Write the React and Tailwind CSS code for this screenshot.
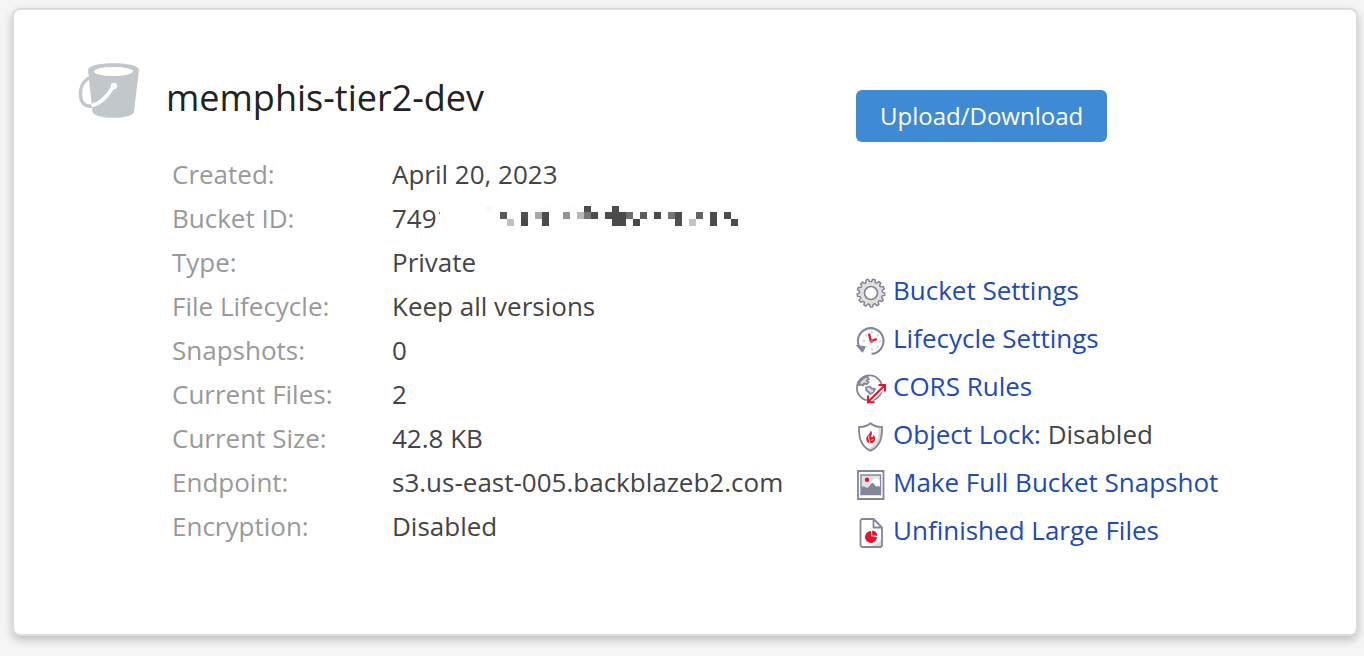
import React from "react";

const CELL = 7;

// [column, row, shade] of every mosaic cell covering the bucket ID
const MOSAIC = [
  [0, 0, "#f8f8f8"], [8, 0, "#fcfcfc"], [12, 0, "#fdfdfd"], [14, 0, "#4c4c4c"], [18, 0, "#4c4c4c"],
  [2, 1, "#5a5a5a"], [5, 1, "#505050"], [7, 1, "#a8a8a8"], [8, 1, "#4c4c4c"], [11, 1, "#949494"],
  [13, 1, "#b8b8b8"], [14, 1, "#757575"], [15, 1, "#4c4c4c"], [16, 1, "#f6f6f6"], [17, 1, "#4c4c4c"],
  [18, 1, "#4a4a4a"], [19, 1, "#4a4a4a"], [20, 1, "#6e6e6e"], [22, 1, "#5a5a5a"], [24, 1, "#4c4c4c"],
  [26, 1, "#757575"], [27, 1, "#4c4c4c"], [30, 1, "#646464"], [32, 1, "#4c4c4c"], [34, 1, "#4c4c4c"],
  [35, 1, "#fcfcfc"],
  [3, 2, "#c0c0c0"], [5, 2, "#4a4a4a"], [8, 2, "#4a4a4a"], [18, 2, "#4a4a4a"], [19, 2, "#4a4a4a"],
  [21, 2, "#4a4a4a"], [27, 2, "#505050"], [29, 2, "#c4c4c4"], [32, 2, "#4a4a4a"], [35, 2, "#4a4a4a"],
];

function BucketIcon() {
  return (
    <svg className="h-[56px] w-[62px] shrink-0" viewBox="-1 -1 62 56" fill="none" aria-hidden="true">
      <path
        d="M9 7C9 3 20 0.3 34.500 0.300S60 3 60 7L55 48.500C54.500 52.500 46 54.800 34.500 54.800S14.500 52.500 13.500 48.500Z"
        fill="#c2c7cb"
      />
      <ellipse cx="34.500" cy="8.500" rx="19.500" ry="4.500" fill="#fff" />
      <path d="M10 15C4 18 1 25 1.500 32.500C2 40 6 44 13 43" stroke="#c2c7cb" strokeWidth="3.500" />
      <path d="M12.500 42.500C21 41 28 34 34 24" stroke="#fff" strokeWidth="3.600" />
      <circle cx="35" cy="23" r="3.200" fill="#fff" />
    </svg>
  );
}

const iconProps = {
  className: "h-[30px] w-[30px] shrink-0",
  viewBox: "0 0 30 30",
  fill: "none",
  "aria-hidden": true,
};

const GEAR_PATH = (() => {
  const teeth = 13;
  const step = (Math.PI * 2) / teeth;
  const at = (angle, r) => `${(15 + r * Math.cos(angle)).toFixed(2)} ${(15 + r * Math.sin(angle)).toFixed(2)}`;
  let d = "";
  for (let i = 0; i < teeth; i++) {
    const a = (i + 0.5) * step - Math.PI / 2;
    d += `${i ? "L" : "M"}${at(a - step * 0.24, 13.9)}L${at(a + step * 0.12, 13.9)}L${at(a + step * 0.24, 11.7)}Q${at(a + step * 0.42, 10.9)} ${at(a + step * 0.6, 11.7)}`;
  }
  return d + "Z";
})();

function GearIcon() {
  return (
    <svg {...iconProps}>
      <path d={GEAR_PATH} fill="#e3e0db" stroke="#83859b" strokeWidth="1.500" strokeLinejoin="round" />
      <circle cx="15" cy="15" r="6.500" fill="#fff" stroke="#83859b" strokeWidth="1.700" />
    </svg>
  );
}

function HistoryIcon() {
  return (
    <svg {...iconProps}>
      <path d="M4.300 22.500A12.800 12.800 0 1 1 15.500 27.800" stroke="#83859b" strokeWidth="2.100" />
      <path d="M0.500 19.500L9.300 20.800L6.500 26.300Z" fill="#83859b" stroke="#83859b" strokeLinejoin="round" />
      <path
        d="M16 5V7.500M16 22V24.500M6.500 15H9M23 15H25.500M9.300 8.300L11 10M22.700 8.300L21 10M22.700 21.700L21 20M9.300 21.700L11 20"
        stroke="#d5d2cd"
        strokeWidth="1.500"
      />
      <path d="M13 7.500L14.800 15.200L20.800 13" stroke="#e81328" strokeWidth="2.300" />
      <circle cx="15.800" cy="15.300" r="1.600" fill="#83859b" />
    </svg>
  );
}

function GlobeIcon() {
  return (
    <svg {...iconProps}>
      <circle cx="13.500" cy="14" r="12.600" stroke="#83859b" strokeWidth="1.800" />
      <path
        d="M3.500 8.500C5.500 5 8 3.200 11 2.500L13 5L10.500 6.500L12.800 8L11 10L8 9.500L7 11.500L5 10.500L2.500 11ZM10 13.500L14 12.500L15.500 14.500L19 15L17.500 18.500L14 20L12.500 18L10.500 16.500Z"
        fill="#dfdcd7"
        stroke="#83859b"
        strokeWidth="1.800"
        strokeLinejoin="round"
      />
      <path d="M12 28L29 11" stroke="#fff" strokeWidth="5" />
      <path d="M12 28L29 11M22.500 11H29V17.500M12 21.500V28.200H18.500" stroke="#e81328" strokeWidth="2" />
    </svg>
  );
}

function ShieldIcon() {
  return (
    <svg {...iconProps}>
      <path
        d="M14.500 1.200C11 4 7 5.200 3 4.800C2.800 14.500 4 24 14.500 28.800C25 24 26.200 14.500 26 4.800C22 5.200 18 4 14.500 1.200Z"
        fill="#fff"
      />
      <path d="M22.500 6C23.500 14 21.500 22.500 12 26.800L14.500 28.500C24.500 24 26 15 26 5Z" fill="#dedbd6" />
      <path
        d="M14.500 1.200C11 4 7 5.200 3 4.800C2.800 14.500 4 24 14.500 28.800C25 24 26.200 14.500 26 4.800C22 5.200 18 4 14.500 1.200Z"
        stroke="#83859b"
        strokeWidth="1.800"
        strokeLinejoin="round"
      />
      <path
        d="M14.500 8.500C16.500 10 16 12 15.300 13.500C14.800 15 15.800 16 16.800 15C17.500 14.200 17.400 13.200 17.300 12.500C19.300 14.500 20 18 17.800 20.200C16 21.800 12.800 21.800 11.200 19.800C9.500 17.500 10.300 15 12 13.200C13.500 11.500 14.800 10.500 14.500 8.500Z"
        fill="#e81328"
      />
      <path d="M13 13.500C11.800 17 14 18 13.800 21.500M15 18.500L17.500 17.500" stroke="#fff" strokeWidth="0.900" />
    </svg>
  );
}

function PictureIcon() {
  return (
    <svg {...iconProps}>
      <path d="M2 1H27.500V29H2Z" fill="#fff" stroke="#83859b" strokeWidth="1.800" />
      <path d="M5 5H24.500V24.500H5Z" fill="#e3e0dc" stroke="#83859b" strokeWidth="1.400" />
      <path d="M13 14L17.500 9.500C20 7 22 8 23.800 11V17H13Z" fill="#fff" />
      <path d="M5 18C7 15.500 9 16.500 11 18C13.500 17.500 14 13 16.500 13C18.500 13 18.500 16 20.500 16.500C22 16 23.500 16 25 17.500V25H5Z" fill="#83859b" />
      <circle cx="11" cy="9.800" r="2.200" fill="#e81328" />
    </svg>
  );
}

function FileIcon() {
  return (
    <svg {...iconProps}>
      <path d="M6.500 1H17.500L26 9.500V26.500A2 2 0 0 1 24 29H6.500A2 2 0 0 1 4.500 26.800V3A2 2 0 0 1 6.500 1Z" fill="#fff" />
      <path d="M25.500 21V28.500H12C18 27.500 23 25 25.500 21Z" fill="#dedbd6" />
      <path
        d="M6.500 1H17.500L26 9.500V27A2 2 0 0 1 24 29H6.500A2 2 0 0 1 4.500 27V3A2 2 0 0 1 6.500 1ZM17.500 1V9.500H26"
        stroke="#83859b"
        strokeWidth="1.800"
        strokeLinejoin="round"
      />
      <path d="M15 13A6 6 0 1 0 21 19L15.500 18.300Z" fill="#e81328" />
      <path d="M16 12.800A5.500 5.500 0 0 1 21.300 17.800L16.300 17.400Z" fill="#e81328" />
    </svg>
  );
}

function MaskedId() {
  return (
    <span className="flex items-center">
      749
      <svg className="h-[25px] w-[304px]" viewBox="0 0 304 25" shapeRendering="crispEdges" role="img" aria-label="hidden">
        <rect x="2" y="6" width="1" height="2" fill="#777" />
        {MOSAIC.map(([col, row, shade]) => (
          <rect key={`${col}-${row}`} x={49 + col * CELL} y={row * CELL - 1} width={CELL} height={CELL} fill={shade} />
        ))}
      </svg>
    </span>
  );
}

const details = [
  ["Created:", "April 20, 2023"],
  ["Bucket ID:", <MaskedId />],
  ["Type:", "Private"],
  ["File Lifecycle:", "Keep all versions"],
  ["Snapshots:", "0"],
  ["Current Files:", "2"],
  ["Current Size:", "42.8 KB"],
  ["Endpoint:", "s3.us-east-005.backblazeb2.com"],
  ["Encryption:", "Disabled"],
];

const actions = [
  { Icon: GearIcon, label: "Bucket Settings" },
  { Icon: HistoryIcon, label: "Lifecycle Settings" },
  { Icon: GlobeIcon, label: "CORS Rules" },
  { Icon: ShieldIcon, label: "Object Lock:", status: "Disabled" },
  { Icon: PictureIcon, label: "Make Full Bucket Snapshot" },
  { Icon: FileIcon, label: "Unfinished Large Files" },
];

export default function App() {
  return (
    <main className="min-h-screen bg-[#f5f5f5] pt-2 pr-1.5 pb-5 pl-3 font-['Open_Sans','Noto_Sans',sans-serif] text-[26px] leading-[44px] text-[#444]">
      <section className="flex rounded-lg border-2 border-[#dcdcdc] bg-white px-16 pt-[52px] pb-20 shadow-[0_4px_10px_rgba(0,0,0,0.22)]">
        <div className="w-[778px] shrink-0">
          <header className="flex gap-[26px]">
            <BucketIcon />
            <h1 className="pt-3 text-[36px] leading-[48px] text-[#222]">memphis-tier2-dev</h1>
          </header>
          <dl className="mt-[30px] ml-[94px]">
            {details.map(([term, value]) => (
              <div key={term} className="flex">
                <dt className="w-[220px] shrink-0 text-[#999]">{term}</dt>
                <dd>{value}</dd>
              </div>
            ))}
          </dl>
        </div>
        <div className="min-w-0 pt-7">
          <button type="button" className="h-[52px] rounded-md bg-[#3f8ad4] px-6 text-2xl text-white">
            Upload/Download
          </button>
          <ul className="mt-[124px] leading-[48px]">
            {actions.map(({ Icon, label, status }) => (
              <li key={label} className="flex items-center gap-[7px] whitespace-nowrap">
                <span className="pt-1.5">
                  <Icon />
                </span>
                <span>
                  <a href="#" className="text-[#2149b8]">{label}</a>
                  {status && ` ${status}`}
                </span>
              </li>
            ))}
          </ul>
        </div>
      </section>
    </main>
  );
}
